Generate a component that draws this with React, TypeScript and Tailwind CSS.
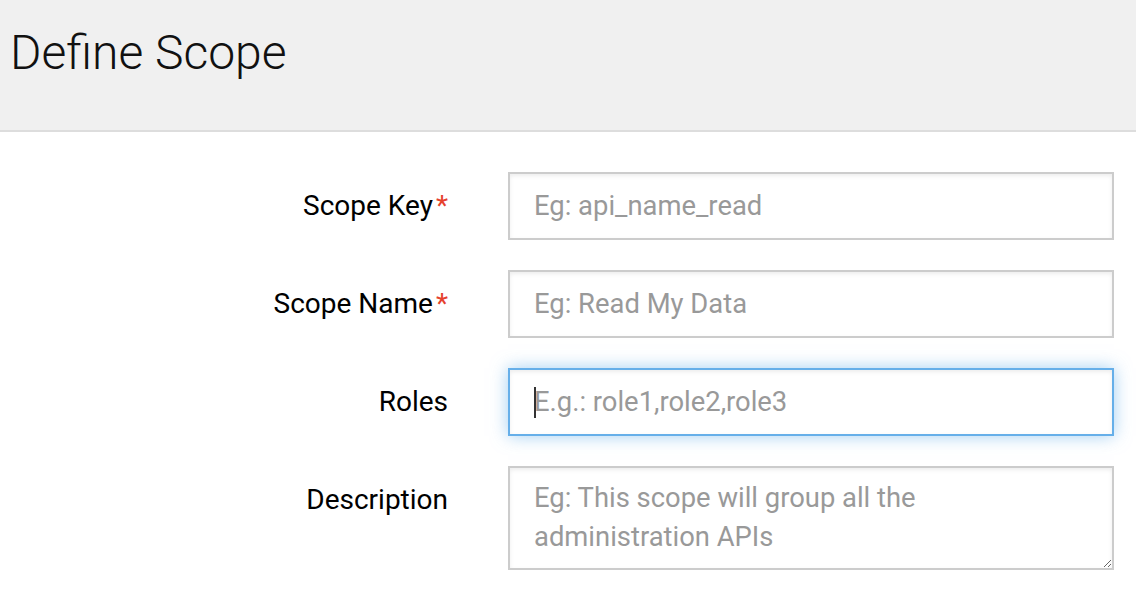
import React from "react";

const font = { fontFamily: "Roboto, 'Noto Sans', sans-serif" };

function Label({ text, required }: { text: string; required?: boolean }) {
  return (
    <div className="w-[448px] shrink-0 text-right text-[28px] leading-[40px] text-black">
      {text}
      {required && <span className="ml-[3px] text-[#e5412d]">*</span>}
    </div>
  );
}

const inputBase =
  "w-[606px] h-[68px] border-2 border-[#cccccc] bg-white px-[24px] text-[27.4px] text-[#555] outline-none placeholder:text-[#999999] shadow-[inset_0_2px_4px_rgba(0,0,0,0.075)]";

export default function App() {
  return (
    <div className="w-[1136px] h-[592px] bg-white overflow-hidden" style={font}>
      <div className="h-[132px] bg-[#f0f0f0] border-b-2 border-[#dddddd] flex items-start">
        <h1 className="pl-[10px] pt-[21px] text-[48px] font-light leading-[64px] text-[#111]">
          Define Scope
        </h1>
      </div>
      <div className="flex flex-col gap-[30px] pt-[40px]">
        <div className="flex items-center gap-[60px]">
          <Label text="Scope Key" required />
          <input className={inputBase} placeholder="Eg: api_name_read" />
        </div>
        <div className="flex items-center gap-[60px]">
          <Label text="Scope Name" required />
          <input className={inputBase} placeholder="Eg: Read My Data" />
        </div>
        <div className="flex items-center gap-[60px]">
          <Label text="Roles" />
          <div className="relative">
            <input
              className="w-[606px] h-[68px] border-2 border-[#66afe9] bg-white px-[24px] text-[27.4px] text-[#555] outline-none placeholder:text-[#999999] shadow-[inset_0_2px_4px_rgba(0,0,0,0.075),0_0_16px_rgba(102,175,233,0.6)]"
              placeholder="E.g.: role1,role2,role3"
            />
            <span className="absolute left-[26px] top-[19px] h-[31px] w-[2px] bg-[#333]" />
          </div>
        </div>
        <div className="flex items-start gap-[60px]">
          <div className="pt-[14px]">
            <Label text="Description" />
          </div>
          <textarea
            className="w-[606px] h-[104px] border-2 border-[#cccccc] bg-white px-[24px] pt-[11px] pb-[12px] text-[27.4px] leading-[39px] text-[#555] outline-none placeholder:text-[#999999] shadow-[inset_0_2px_4px_rgba(0,0,0,0.075)] resize-y"
            placeholder="Eg: This scope will group all the administration APIs"
          />
        </div>
      </div>
    </div>
  );
}
